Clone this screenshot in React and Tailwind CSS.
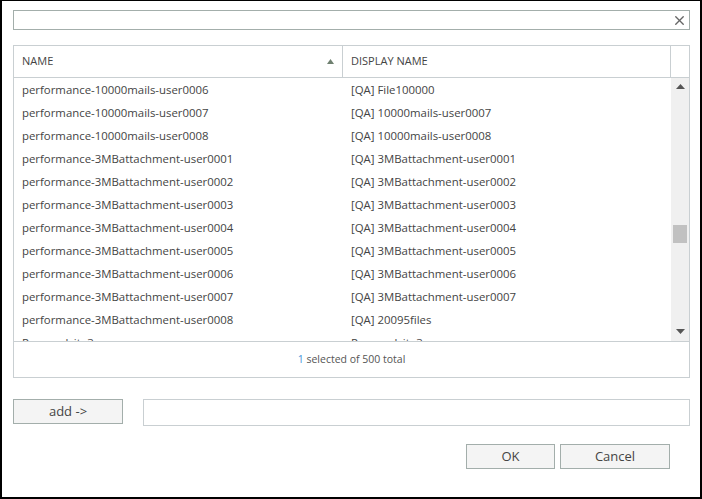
import { X } from 'lucide-react'

const rows = [
  ['performance-10000mails-user0006', '[QA] File100000'],
  ['performance-10000mails-user0007', '[QA] 10000mails-user0007'],
  ['performance-10000mails-user0008', '[QA] 10000mails-user0008'],
  ['performance-3MBattachment-user0001', '[QA] 3MBattachment-user0001'],
  ['performance-3MBattachment-user0002', '[QA] 3MBattachment-user0002'],
  ['performance-3MBattachment-user0003', '[QA] 3MBattachment-user0003'],
  ['performance-3MBattachment-user0004', '[QA] 3MBattachment-user0004'],
  ['performance-3MBattachment-user0005', '[QA] 3MBattachment-user0005'],
  ['performance-3MBattachment-user0006', '[QA] 3MBattachment-user0006'],
  ['performance-3MBattachment-user0007', '[QA] 3MBattachment-user0007'],
  ['performance-3MBattachment-user0008', '[QA] 20095files'],
  ['Personalsite3', 'Personalsite3'],
]

const font = { fontFamily: '"Open Sans", "Noto Sans", sans-serif' }

function Tri({ down, color = '#555', w = 9, h = 5 }) {
  return (
    <svg width={w} height={h} viewBox={`0 0 ${w} ${h}`}>
      <path d={down ? `M0 0H${w}L${w / 2} ${h}Z` : `M0 ${h}H${w}L${w / 2} 0Z`} fill={color} />
    </svg>
  )
}

export default function App() {
  return (
    <div
      className="w-[702px] h-[499px] bg-white border-t border-l-2 border-r-2 border-b-2 border-black pt-[9px] pl-[11px] pr-[10px] flex flex-col text-[#444]"
      style={font}
    >
      {/* search */}
      <div className="h-[20px] border border-[#a3aeab] flex items-center justify-end pr-[2px]">
        <X size={15} strokeWidth={2.2} className="text-[#666]" />
      </div>

      {/* table */}
      <div className="mt-[15px] h-[333px] border border-[#c9cfd2] flex flex-col">
        <div className="h-[32px] flex border-b border-[#c9cfd2] text-[11px] shrink-0">
          <div className="w-[329px] flex items-center justify-between pl-[8px] pr-[8px] border-r border-[#c9cfd2]">
            <span>NAME</span>
            <Tri color="#6f8070" w={7} h={5} />
          </div>
          <div className="flex-1 flex items-center pl-[8px] border-r border-[#c9cfd2]">DISPLAY NAME</div>
          <div className="w-[18px]" />
        </div>

        <div className="h-[264px] flex border-b border-[#c9cfd2] overflow-hidden shrink-0">
          <div className="flex-1 overflow-hidden">
            {rows.map(([n, d]) => (
              <div key={n + d} className="h-[23px] flex items-center text-[11.4px] shrink-0">
                <div className="w-[329px] pl-[8px] whitespace-nowrap">{n}</div>
                <div className="pl-[8px] whitespace-nowrap">{d}</div>
              </div>
            ))}
          </div>
          <div className="w-[18px] bg-[#f0f0f0] flex flex-col items-center justify-between pt-[6px] pb-[7px]">
            <Tri />
            <div className="flex-1 w-full px-[2px] pt-[136px]">
              <div className="h-[18px] bg-[#c1c1c1]" />
            </div>
            <Tri down />
          </div>
        </div>

        <div className="flex-1 flex items-center justify-center text-[10.5px] text-[#555]">
          <span><span className="text-[#4a90d9]">1</span> selected of 500 total</span>
        </div>
      </div>

      {/* add row */}
      <div className="mt-[21px] flex items-start gap-[20px]">
        <button className="w-[110px] h-[25px] bg-[#f4f4f4] border border-[#a3aeab] text-[13px] text-[#444]">
          add -&gt;
        </button>
        <div className="flex-1 h-[27px] border border-[#c9cfd2]" />
      </div>

      {/* footer buttons */}
      <div className="mt-[18px] flex justify-end gap-[5px] pr-[20px]">
        <button className="w-[89px] h-[25px] bg-[#f4f4f4] border border-[#a3aeab] text-[13px] text-[#444]">OK</button>
        <button className="w-[110px] h-[25px] bg-[#f4f4f4] border border-[#a3aeab] text-[13px] text-[#444]">Cancel</button>
      </div>
    </div>
  )
}
